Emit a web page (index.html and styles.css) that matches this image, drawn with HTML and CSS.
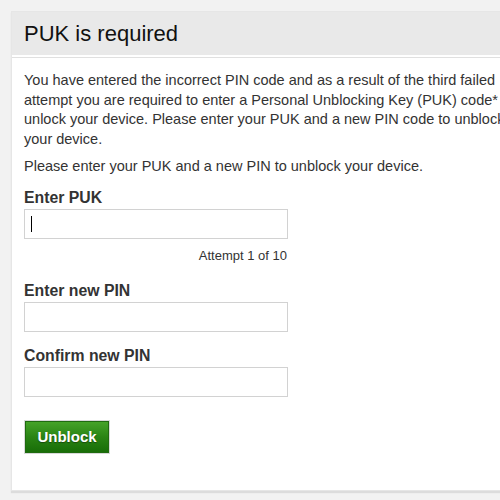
FILE: index.html
```html
<!DOCTYPE html>
<html>
<head>
<meta charset="utf-8">
<link rel="stylesheet" href="styles.css">
</head>
<body>
<div class="panel">
  <div class="panel-header">
    <h1 class="title">PUK is required</h1>
  </div>
  <div class="panel-body">
    <p class="intro">You have entered the incorrect PIN code and as a result of the third failed attempt you are required to enter a Personal Unblocking Key (PUK) code* to unlock your device. Please enter your PUK and a new PIN code to unblock your device.</p>
    <p class="intro">Please enter your PUK and a new PIN to unblock your device.</p>
    <form class="form">
      <div class="field">
        <label class="label">Enter PUK</label>
        <div class="input-wrap">
          <input class="input" type="text">
          <span class="caret"></span>
        </div>
        <div class="hint">Attempt 1 of 10</div>
      </div>
      <div class="field">
        <label class="label">Enter new PIN</label>
        <input class="input" type="password">
      </div>
      <div class="field">
        <label class="label">Confirm new PIN</label>
        <input class="input" type="password">
      </div>
      <div class="actions">
        <button class="btn" type="button">Unblock</button>
      </div>
    </form>
  </div>
</div>
</body>
</html>
```

FILE: styles.css
```css
html, body {
  margin: 0;
  padding: 0;
  overflow: hidden;
  background: #f2f2f2;
}
body {
  width: 500px;
  height: 500px;
  padding: 11px 0 0 11px;
  box-sizing: border-box;
  font-family: "Liberation Sans", Arial, sans-serif;
  color: #333;
}
.panel {
  width: 540px;
  border: 1px solid #e6e6e6;
  border-right: none;
  background: #fff;
  box-shadow: 0 2px 1px #dcdcdc;
}
.panel-header {
  height: 43px;
  background: #e9e9e9;
  border-bottom: 2px solid #fff;
  padding-left: 12px;
  display: flex;
  align-items: center;
}
.title {
  margin: 0;
  font-size: 22px;
  font-weight: normal;
  color: #111;
}
.panel-body {
  border-top: 1px solid #e0e0e0;
  padding: 13px 12px 38px 12px;
  height: 433px;
  box-sizing: border-box;
}
.intro {
  margin: 0 0 8px 0;
  width: 497px;
  font-size: 14.5px;
  line-height: 19.6px;
  color: #333;
}
.form {
  margin-top: 12px;
  width: 264px;
}
.field {
  display: flex;
  flex-direction: column;
}
.field + .field {
  margin-top: 15px;
}
.label {
  font-size: 15.8px;
  font-weight: bold;
  line-height: 18px;
  margin-bottom: 2px;
  color: #333;
}
.input-wrap {
  position: relative;
}
.input {
  display: block;
  width: 264px;
  height: 30px;
  box-sizing: border-box;
  border: 1px solid #d2d2d2;
  background: #fff;
  margin: 0;
  padding: 0 6px;
  outline: none;
}
.caret {
  position: absolute;
  left: 7px;
  top: 7px;
  width: 1px;
  height: 16px;
  background: #000;
}
.hint {
  margin-top: 10px;
  margin-bottom: 4px;
  text-align: right;
  font-size: 13px;
  line-height: 14px;
  color: #333;
  padding-right: 1px;
}
.actions {
  margin-top: 23px;
}
.btn {
  display: block;
  width: 86px;
  height: 34px;
  padding: 0;
  border: none;
  cursor: pointer;
  font-family: "Liberation Sans", Arial, sans-serif;
  font-size: 15px;
  font-weight: bold;
  color: #fff;
  box-shadow: inset 0 0 0 1px #d8d8d8, inset 0 0 0 2px #1f6b0f;
  background: linear-gradient(#48a72a, #2a8414 50%, #166a06);
  text-shadow: 0 1px 1px #1a4a0c;
}
```
